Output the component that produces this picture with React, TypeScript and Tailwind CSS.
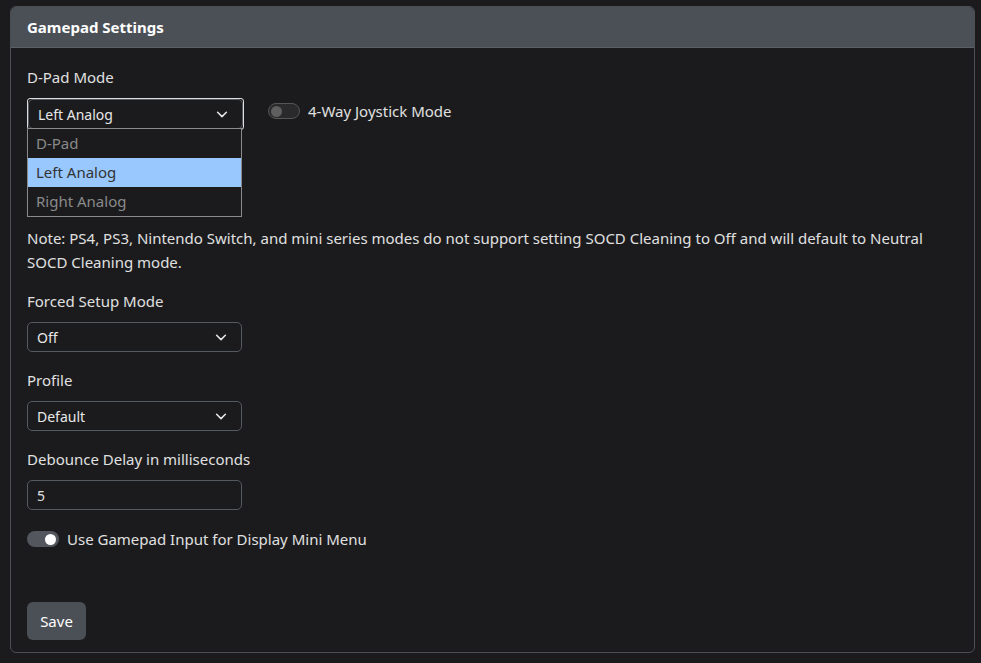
import React from "react";

const Chevron = () => (
  <svg width="14" height="14" viewBox="0 0 16 16" fill="none" stroke="#e5e5e5" strokeWidth="1.8" strokeLinecap="round" strokeLinejoin="round">
    <path d="M3 6l5 5 5-5" />
  </svg>
);

const Select = ({ value }: { value: string }) => (
  <div className="w-[215px] h-[30px] border border-[#555a60] rounded-[5px] flex items-center justify-between pl-[9px] pr-[13px] text-[14px] text-[#e8e8e8]">
    <span>{value}</span>
    <Chevron />
  </div>
);

export default function App() {
  return (
    <div className="w-[981px] h-[663px] bg-[#1b1b1d] pt-[6px] pl-[10px] pr-[6px]" style={{ fontFamily: '"Noto Sans", "Open Sans", sans-serif' }}>
      <div className="h-[647px] border border-[#4a4d52] rounded-[6px] overflow-hidden flex flex-col">
        <div className="h-[41px] bg-[#4b5057] border-b border-[#5c6167] flex items-center px-[16px] text-[15px] font-bold text-white">
          Gamepad Settings
        </div>
        <div className="px-[16px] text-[#e0e0e0] text-[15px] flex flex-col">
          <div className="mt-[18px] leading-[22px]">D-Pad Mode</div>
          <div className="mt-[10px] flex items-start gap-[24px] relative">
            <div className="border border-[#ddd] rounded-[3px]">
              <Select value="Left Analog" />
            </div>
            <div className="absolute left-0 top-[30px] w-[215px] border border-[#8a8a8a] bg-[#1b1b1d] text-[15px] z-10">
              <div className="h-[29px] flex items-center px-[8px] text-[#8a8a8a]">D-Pad</div>
              <div className="h-[29px] flex items-center px-[8px] bg-[#99c8ff] text-[#333]">Left Analog</div>
              <div className="h-[29px] flex items-center px-[8px] text-[#8a8a8a]">Right Analog</div>
            </div>
            <div className="flex items-center gap-[8px] mt-[2px]">
              <div className="w-[32px] h-[16px] rounded-full border border-[#555] bg-[#2a2a2c] flex items-center px-[2px]">
                <div className="w-[11px] h-[11px] rounded-full bg-[#5f5f5f]" />
              </div>
              <span className="leading-[22px]">4-Way Joystick Mode</span>
            </div>
          </div>
          <div className="mt-[96px] leading-[24px]">
            Note: PS4, PS3, Nintendo Switch, and mini series modes do not support setting SOCD Cleaning to Off and will default to Neutral SOCD Cleaning mode.
          </div>
          <div className="mt-[16px] leading-[22px]">Forced Setup Mode</div>
          <div className="mt-[10px]"><Select value="Off" /></div>
          <div className="mt-[17px] leading-[22px]">Profile</div>
          <div className="mt-[10px]"><Select value="Default" /></div>
          <div className="mt-[17px] leading-[22px]">Debounce Delay in milliseconds</div>
          <div className="mt-[10px] w-[215px] h-[30px] border border-[#555a60] rounded-[5px] flex items-center px-[9px] text-[14px]">5</div>
          <div className="mt-[18px] flex items-center gap-[8px]">
            <div className="w-[32px] h-[16px] rounded-full bg-[#53575d] flex items-center justify-end px-[3px]">
              <div className="w-[11px] h-[11px] rounded-full bg-white" />
            </div>
            <span className="leading-[22px]">Use Gamepad Input for Display Mini Menu</span>
          </div>
          <div className="mt-[52px]">
            <button className="w-[59px] h-[38px] rounded-[6px] bg-[#4b5057] text-white text-[15px]">Save</button>
          </div>
        </div>
      </div>
    </div>
  );
}
